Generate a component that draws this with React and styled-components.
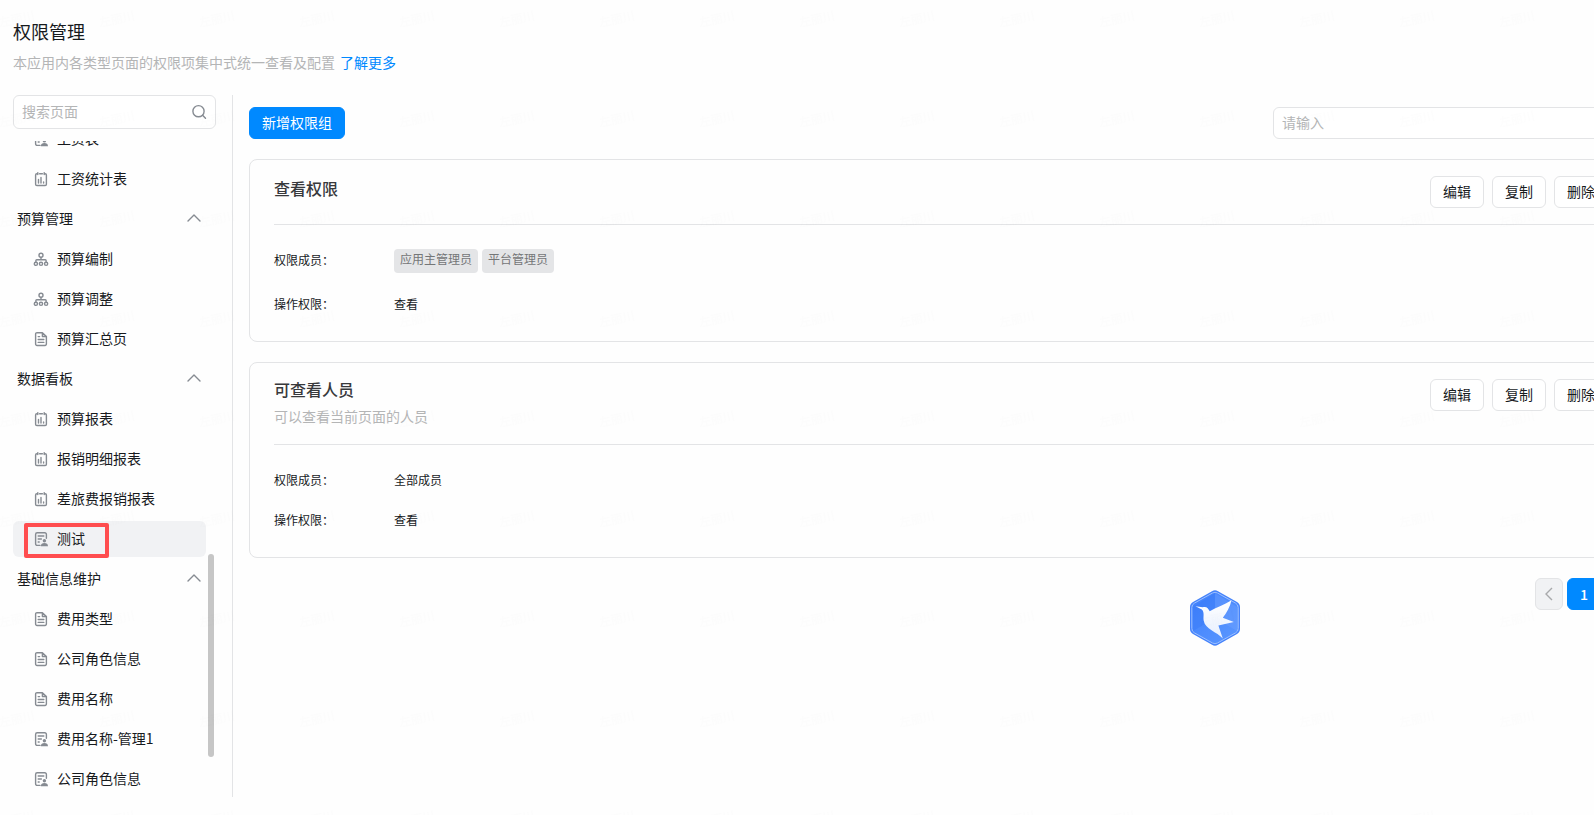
import React, { useState } from "react";
import styled, { createGlobalStyle } from "styled-components";

const GlobalStyle = createGlobalStyle`
  * {
    box-sizing: border-box;
  }
  body {
    margin: 0;
    background: #fefefe;
    color: #171a1d;
    font-family: "Noto Sans CJK SC", "Microsoft YaHei", sans-serif;
    font-size: 14px;
    overflow: hidden;
  }
  button, input {
    font-family: inherit;
    font-size: 14px;
  }
`;

const Page = styled.div`
  display: flex;
  flex-direction: column;
  height: 100vh;
  padding: 19px 0 18px 13px;
`;

const Header = styled.header`
  margin-bottom: 22px;
`;

const Title = styled.h1`
  margin: 0 0 7px;
  font-size: 18px;
  font-weight: 400;
  line-height: 25px;
`;

const SubTitle = styled.p`
  margin: 0;
  line-height: 22px;
  color: #b4b5b6;
`;

const Link = styled.a`
  margin-left: 5px;
  color: #0089ff;
  text-decoration: none;
`;

const Body = styled.div`
  display: flex;
  flex: 1;
  min-height: 0;
`;

const Sidebar = styled.aside`
  display: flex;
  flex-direction: column;
  width: 220px;
  flex-shrink: 0;
  padding-right: 16px;
  border-right: 1px solid #e3e4e6;
`;

const SearchBox = styled.div`
  display: flex;
  align-items: center;
  height: 34px;
  padding: 0 8px;
  border: 1px solid #e3e4e6;
  border-radius: 6px;
  background: #fff;
`;

const SearchInput = styled.input`
  flex: 1;
  min-width: 0;
  padding: 0 0 2px;
  border: none;
  outline: none;
  background: none;
  &::placeholder {
    color: #b4b5b6;
  }
`;

const MenuWrap = styled.div`
  display: flex;
  flex: 1;
  min-height: 0;
  margin-top: 12px;
  gap: 2px;
`;

const Menu = styled.nav`
  display: flex;
  flex: 1;
  flex-direction: column;
  justify-content: flex-end;
  gap: 4px;
  overflow: hidden;
`;

const ScrollTrack = styled.div`
  display: flex;
  flex-direction: column;
  justify-content: flex-end;
  width: 6px;
  margin-right: 2px;
  padding-bottom: 40px;
`;

const ScrollThumb = styled.div`
  height: 33%;
  border-radius: 3px;
  background: #c6c6c6;
`;

const GroupButton = styled.button`
  display: flex;
  align-items: center;
  justify-content: space-between;
  flex-shrink: 0;
  height: 36px;
  padding: 0 4px 2px;
  border: none;
  background: none;
  color: inherit;
  cursor: pointer;
`;

const MenuItem = styled.a`
  display: flex;
  align-items: center;
  flex-shrink: 0;
  height: 36px;
  padding-left: 20px;
  border-radius: 6px;
  background: ${(props) => (props.$active ? "#f1f2f4" : "transparent")};
  color: inherit;
  text-decoration: none;
`;

const MenuLabel = styled.span`
  position: relative;
  display: flex;
  align-items: center;
  gap: 8px;
  height: 20px;
  &::after {
    content: "";
    display: ${(props) => (props.$marked ? "block" : "none")};
    position: absolute;
    inset: -6px -24px -9px -9px;
    border: 4px solid #ff4d4f;
    border-radius: 2px;
  }
`;

const MenuText = styled.span`
  padding-bottom: 2px;
  line-height: 20px;
`;

const Main = styled.main`
  flex: 1;
  min-width: 0;
  /* the panel runs on past the right edge of the window */
  margin-right: -39px;
  padding: 12px 0 0 16px;
`;

const Toolbar = styled.div`
  display: flex;
  justify-content: space-between;
  margin-bottom: 20px;
`;

const PrimaryButton = styled.button`
  height: 32px;
  padding: 0 12px 2px;
  border: 1px solid #0089ff;
  border-radius: 6px;
  background: #0089ff;
  color: #fff;
  cursor: pointer;
`;

const FilterInput = styled.input`
  width: 360px;
  height: 32px;
  padding: 0 8px 2px;
  border: 1px solid #e3e4e6;
  border-radius: 6px;
  outline: none;
  background: #fff;
  &::placeholder {
    color: #b4b5b6;
  }
`;

const Card = styled.section`
  margin-bottom: 20px;
  padding: 16px 24px 24px;
  border: 1px solid #e3e4e6;
  border-radius: 8px;
`;

const CardHeader = styled.div`
  display: flex;
  justify-content: space-between;
  align-items: flex-start;
  padding-bottom: 16px;
  border-bottom: 1px solid #e3e4e6;
`;

const CardTitle = styled.h2`
  margin: 0;
  font-size: 16px;
  font-weight: 500;
  line-height: ${(props) => (props.$compact ? "20px" : "24px")};
  color: #38393c;
`;

const CardDesc = styled.p`
  margin: 6px 0 0;
  line-height: 23px;
  color: #b4b5b6;
`;

const Actions = styled.div`
  display: flex;
  gap: 8px;
`;

const ActionButton = styled.button`
  height: 32px;
  padding: 0 12px 2px;
  border: 1px solid #e3e4e6;
  border-radius: 6px;
  background: #fff;
  color: #171a1d;
  cursor: pointer;
`;

const Fields = styled.dl`
  display: flex;
  flex-direction: column;
  gap: 16px;
  margin: 24px 0 0;
  font-size: 12px;
  line-height: 22px;
`;

const Field = styled.div`
  display: flex;
  min-height: 24px;
`;

const FieldLabel = styled.dt`
  width: 120px;
`;

const FieldValue = styled.dd`
  display: flex;
  gap: 4px;
  margin: 0;
`;

const Tag = styled.span`
  height: 24px;
  margin-bottom: 4px;
  padding: 0 6px;
  border-radius: 4px;
  background: #e4e5e7;
  color: #747677;
  line-height: 20px;
`;

const Pager = styled.div`
  display: flex;
  justify-content: flex-end;
  gap: 4px;
`;

const PagerButton = styled.button`
  display: flex;
  align-items: center;
  justify-content: center;
  width: ${(props) => (props.$current ? "34px" : "28px")};
  height: 32px;
  padding: 0;
  border: 1px solid ${(props) => (props.$current ? "#0089ff" : "#e3e4e6")};
  border-radius: 6px;
  background: ${(props) => (props.$current ? "#0089ff" : "#f1f2f4")};
  color: ${(props) => (props.$current ? "#fff" : "#a8a9ab")};
  font-weight: 500;
`;

const Floating = styled.div`
  position: fixed;
  right: 353px;
  bottom: 168px;
  line-height: 0;
`;

const Watermark = styled.svg`
  position: fixed;
  inset: 0;
  width: 100%;
  height: 100%;
  pointer-events: none;
`;

const Icon = ({ children }) => (
  <svg
    width="16"
    height="16"
    viewBox="0 0 16 16"
    fill="none"
    stroke="#868b92"
    strokeWidth="1.4"
    strokeLinecap="round"
    strokeLinejoin="round"
    aria-hidden="true"
  >
    {children}
  </svg>
);

const icons = {
  report: (
    <Icon>
      <path d="M4.6 2.8H3.9A1.3 1.3 0 0 0 2.6 4.1v9.1a1.3 1.3 0 0 0 1.3 1.3h8.2a1.3 1.3 0 0 0 1.3-1.3V4.1a1.3 1.3 0 0 0-1.3-1.3h-.7M6.6 2.8h2.8M4.8 1.6v2M11.2 1.6v2" />
      <path d="M5.5 8.4V12M8 6.4V12M10.6 11v1" />
    </Icon>
  ),
  flow: (
    <Icon>
      <circle cx="8" cy="4.3" r="2" />
      <path d="M8 6.5v2.2M2.9 10.8V9.5a.8.8 0 0 1 .8-.8h8.6a.8.8 0 0 1 .8.8v1.3" />
      <circle cx="2.9" cy="12.8" r="1.600" />
      <circle cx="8" cy="12.8" r="1.600" />
      <circle cx="13.1" cy="12.8" r="1.600" />
    </Icon>
  ),
  page: (
    <Icon>
      <path d="M9.4 1.700H4A1.4 1.4 0 0 0 2.600 3.100v10A1.4 1.4 0 0 0 4 14.500h8a1.4 1.4 0 0 0 1.400-1.400V5.500zM9.400 1.700v3.800h4" />
      <path d="M5.200 5.600h1.400M5.200 8.500h5.600M5.200 11.400h5.600" />
    </Icon>
  ),
  manage: (
    <Icon>
      <path d="M7 14.400H4.200a1.600 1.600 0 0 1-1.600-1.600V3.400a1.600 1.600 0 0 1 1.600-1.600h7.600a1.600 1.600 0 0 1 1.600 1.600v3.800" />
      <path d="M5.200 5h5.600M5.200 8h3.200M5.200 11h1" />
      <circle cx="11.400" cy="9.800" r="1.700" fill="#868b92" stroke="none" />
      <path d="M7.800 15.200c0-2.200 1.500-3.200 3.600-3.200s3.600 1 3.600 3.200z" fill="#868b92" stroke="none" />
    </Icon>
  ),
};

const Chevron = () => (
  <Icon>
    <path d="m2 11 6-6 6 6" />
  </Icon>
);

const Logo = () => (
  <svg width="52" height="58" viewBox="0 0 52 58" role="img" aria-label="logo">
    <defs>
      <linearGradient id="hex" x1="0" y1="0" x2="1" y2="1">
        <stop offset="0" stopColor="#3f80fc" />
        <stop offset="1" stopColor="#5b98ff" />
      </linearGradient>
      <linearGradient id="bird" x1="0" y1="0" x2="0" y2="1">
        <stop offset="0" stopColor="#fff" />
        <stop offset="1" stopColor="#e6efff" />
      </linearGradient>
    </defs>
    <path d="M23 2.200a6 6 0 0 1 6 0L48 13a6 6 0 0 1 3 5.200v21.600a6 6 0 0 1-3 5.200L29 55.800a6 6 0 0 1-6 0L4 45a6 6 0 0 1-3-5.200V18.200A6 6 0 0 1 4 13z" fill="#4583fb" />
    <path d="M23.500 4a5 5 0 0 1 5 0L46.700 14.200a5 5 0 0 1 2.500 4.300v21a5 5 0 0 1-2.500 4.300L28.500 54a5 5 0 0 1-5 0L5.300 43.800a5 5 0 0 1-2.500-4.300v-21a5 5 0 0 1 2.500-4.300z" fill="url(#hex)" stroke="#9dc0ff" strokeWidth="1" />
    <path d="M26 4v25L4 42V18z" fill="#2c6ff5" opacity="0.25" />
    <path d="M26 4v25l22 13V18z" fill="#7fadff" opacity="0.25" />
    <path d="M6.500 17.200 13.600 18.300C17.500 17 19.300 19.500 20.700 22.200 27 18.500 36 15.500 42.500 11.300 41 18 37.500 24 33.800 28.700L44.800 33 29.400 36.600 33.800 49.500C28 42.500 16 40.500 14.600 31.200 14.200 27 15.600 23.500 12.800 20.600z" fill="url(#bird)" />
  </svg>
);

const groups = [
  {
    items: [
      { type: "manage", name: "工资表" },
      { type: "report", name: "工资统计表" },
    ],
  },
  {
    name: "预算管理",
    items: [
      { type: "flow", name: "预算编制" },
      { type: "flow", name: "预算调整" },
      { type: "page", name: "预算汇总页" },
    ],
  },
  {
    name: "数据看板",
    items: [
      { type: "report", name: "预算报表" },
      { type: "report", name: "报销明细报表" },
      { type: "report", name: "差旅费报销报表" },
      { type: "manage", name: "测试", active: true },
    ],
  },
  {
    name: "基础信息维护",
    items: [
      { type: "page", name: "费用类型" },
      { type: "page", name: "公司角色信息" },
      { type: "page", name: "费用名称" },
      { type: "manage", name: "费用名称-管理1" },
      { type: "manage", name: "公司角色信息" },
    ],
  },
];

const permissions = [
  { title: "查看权限", tags: ["应用主管理员", "平台管理员"], action: "查看" },
  {
    title: "可查看人员",
    desc: "可以查看当前页面的人员",
    members: "全部成员",
    action: "查看",
  },
];

const PermissionCard = ({ data }) => (
  <Card>
    <CardHeader>
      <div>
        <CardTitle $compact={!!data.desc}>{data.title}</CardTitle>
        {data.desc && <CardDesc>{data.desc}</CardDesc>}
      </div>
      <Actions>
        <ActionButton>编辑</ActionButton>
        <ActionButton>复制</ActionButton>
        <ActionButton>删除</ActionButton>
      </Actions>
    </CardHeader>
    <Fields>
      <Field>
        <FieldLabel>权限成员：</FieldLabel>
        <FieldValue>
          {data.tags ? data.tags.map((tag) => <Tag key={tag}>{tag}</Tag>) : data.members}
        </FieldValue>
      </Field>
      <Field>
        <FieldLabel>操作权限：</FieldLabel>
        <FieldValue>{data.action}</FieldValue>
      </Field>
    </Fields>
  </Card>
);

const App = () => {
  const [keyword, setKeyword] = useState("");
  const [filter, setFilter] = useState("");

  return (
    <Page>
      <GlobalStyle />
      <Header>
        <Title>权限管理</Title>
        <SubTitle>
          本应用内各类型页面的权限项集中式统一查看及配置
          <Link href="#more">了解更多</Link>
        </SubTitle>
      </Header>
      <Body>
        <Sidebar>
          <SearchBox>
            <SearchInput
              aria-label="搜索页面"
              placeholder="搜索页面"
              value={keyword}
              onChange={(e) => setKeyword(e.target.value)}
            />
            <Icon>
              <circle cx="7.500" cy="7.200" r="5.600" />
              <path d="m11.600 11.300 2.900 2.900" />
            </Icon>
          </SearchBox>
          <MenuWrap>
            <Menu>
              {groups.map((group, index) => (
                <React.Fragment key={index}>
                  {group.name && (
                    <GroupButton>
                      {group.name}
                      <Chevron />
                    </GroupButton>
                  )}
                  {group.items.map((item, i) => (
                    <MenuItem key={i} href="#page" $active={item.active}>
                      <MenuLabel $marked={item.active}>
                        {icons[item.type]}
                        <MenuText>{item.name}</MenuText>
                      </MenuLabel>
                    </MenuItem>
                  ))}
                </React.Fragment>
              ))}
            </Menu>
            <ScrollTrack>
              <ScrollThumb />
            </ScrollTrack>
          </MenuWrap>
        </Sidebar>
        <Main>
          <Toolbar>
            <PrimaryButton>新增权限组</PrimaryButton>
            <FilterInput
              aria-label="请输入"
              placeholder="请输入"
              value={filter}
              onChange={(e) => setFilter(e.target.value)}
            />
          </Toolbar>
          {permissions.map((data) => (
            <PermissionCard key={data.title} data={data} />
          ))}
          <Pager>
            <PagerButton disabled aria-label="上一页">
              <svg width="14" height="14" viewBox="0 0 14 14" fill="none" stroke="currentColor" strokeWidth="1.4">
                <path d="M10 1 4 7l6 6" />
              </svg>
            </PagerButton>
            <PagerButton $current>1</PagerButton>
            <PagerButton disabled aria-label="下一页" />
          </Pager>
        </Main>
      </Body>
      <Floating>
        <Logo />
      </Floating>
      <Watermark aria-hidden="true">
        <defs>
          <pattern id="mark" width="100" height="100" patternUnits="userSpaceOnUse">
            <text x="0" y="27" fontSize="12" fill="#000" fillOpacity="0.008" transform="rotate(-12 0 27)">
              左丽川
            </text>
          </pattern>
        </defs>
        <rect width="100%" height="100%" fill="url(#mark)" />
      </Watermark>
    </Page>
  );
};

export default App;
